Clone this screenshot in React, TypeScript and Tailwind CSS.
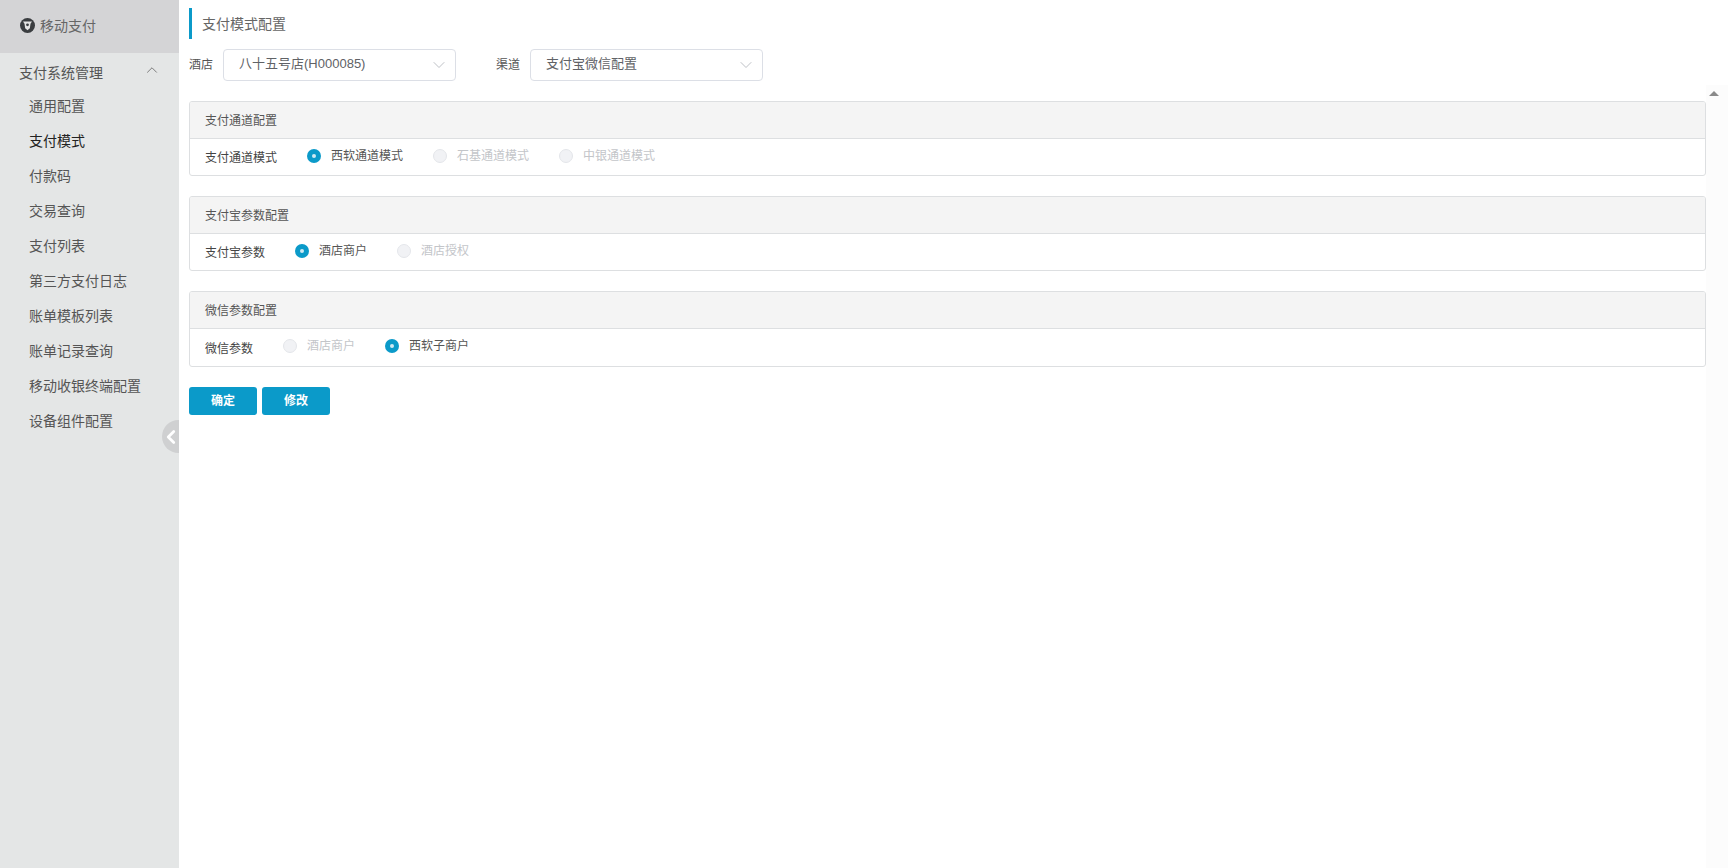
import { ChevronDown, ChevronLeft, ChevronUp } from "lucide-react";

const menuItems = [
  "通用配置",
  "支付模式",
  "付款码",
  "交易查询",
  "支付列表",
  "第三方支付日志",
  "账单模板列表",
  "账单记录查询",
  "移动收银终端配置",
  "设备组件配置",
];

const panels = [
  {
    title: "支付通道配置",
    label: "支付通道模式",
    rowClass: "h-[36px]",
    options: [
      { text: "西软通道模式", checked: true },
      { text: "石基通道模式", checked: false },
      { text: "中银通道模式", checked: false },
    ],
  },
  {
    title: "支付宝参数配置",
    label: "支付宝参数",
    rowClass: "h-[36px]",
    options: [
      { text: "酒店商户", checked: true },
      { text: "酒店授权", checked: false },
    ],
  },
  {
    title: "微信参数配置",
    label: "微信参数",
    rowClass: "h-[37px]",
    options: [
      { text: "酒店商户", checked: false },
      { text: "西软子商户", checked: true },
    ],
  },
];

const Radio = ({ text, checked }: { text: string; checked: boolean }) => (
  <div className="flex items-center gap-[10px] -mt-[3px]">
    {checked ? (
      <span className="flex h-[14px] w-[14px] items-center justify-center rounded-full bg-[#0b9ac9]">
        <span className="h-[4px] w-[4px] rounded-full bg-[#cfe9f3]" />
      </span>
    ) : (
      <span className="h-[14px] w-[14px] rounded-full border border-[#e4e6ea] bg-[#f1f2f5]" />
    )}
    <span className={checked ? "text-[#555]" : "text-[#c3c5c9]"}>{text}</span>
  </div>
);

const Select = ({ value }: { value: string }) => (
  <div className="flex h-[32px] w-[233px] items-center justify-between rounded-[4px] border border-[#dcdfe6] pl-[15px] pr-[6px] text-[13px] text-[#606266]">
    <span className="-mt-[2px]">{value}</span>
    <ChevronDown size={20} strokeWidth={0.9} className="text-[#a8acb3]" />
  </div>
);

const App = () => {
  return (
    <div className="relative flex h-screen overflow-hidden bg-white font-['Liberation_Sans','Noto_Sans_CJK_SC',sans-serif]">
      <aside className="w-[179px] shrink-0 bg-[#e4e6e6] text-sm text-[#555]">
        <div className="flex h-[53px] items-center gap-[5px] bg-[#d4d4d6] pb-[2px] pl-[20px] text-[#666]">
          <svg width="15" height="15" viewBox="0 0 14 14">
            <circle cx="7" cy="7" r="7" fill="#3a3d40" />
            <path d="M2.8 3.2 11.2 3.2 9.8 5.4 9.2 9.6 7 11.4 4.8 9.6 4.2 5.4Z" fill="#e4e4e4" />
            <circle cx="7" cy="6.4" r="1.3" fill="#3a3d40" />
          </svg>
          <span>移动支付</span>
        </div>
        <div className="flex h-[35px] items-center justify-between pl-[19px] pr-[18px] pt-[5px]">
          <span>支付系统管理</span>
          <ChevronUp size={18} strokeWidth={1.1} className="-mt-[6px] text-[#666]" />
        </div>
        <ul className="pl-[29px]">
          {menuItems.map((item) => (
            <li
              key={item}
              className={`flex h-[35px] items-center ${item === "支付模式" ? "text-[#222]" : ""}`}
            >
              {item}
            </li>
          ))}
        </ul>
      </aside>

      <main className="min-w-0 flex-1 pl-[10px] pr-[22px] pt-[8px]">
        <div className="flex h-[31px] items-center border-l-[3px] border-[#0b9ac9] pl-[10px] text-sm text-[#666]">
          支付模式配置
        </div>
        <div className="mt-[10px] flex items-center text-xs text-[#555]">
          <span className="mr-[10px]">酒店</span>
          <Select value="八十五号店(H000085)" />
          <span className="ml-[40px] mr-[10px]">渠道</span>
          <Select value="支付宝微信配置" />
        </div>

        <div className="mt-[20px] flex flex-col gap-[20px] text-xs">
          {panels.map((panel) => (
            <section
              key={panel.title}
              className="overflow-hidden rounded-[3px] border border-[#dddfe1]"
            >
              <div className="flex h-[37px] items-center border-b border-[#dddfe1] bg-[#f4f4f4] pl-[15px] pt-[1px] text-[#555]">
                {panel.title}
              </div>
              <div className={`flex items-center gap-[30px] pl-[15px] text-[#444] ${panel.rowClass}`}>
                <span className="pt-[2px]">{panel.label}</span>
                {panel.options.map((option) => (
                  <Radio key={option.text} text={option.text} checked={option.checked} />
                ))}
              </div>
            </section>
          ))}
        </div>

        <div className="mt-[20px] flex gap-[5px]">
          <button className="h-[28px] w-[68px] rounded-[3px] bg-[#0b9ac9] text-xs font-bold text-white">
            确定
          </button>
          <button className="h-[28px] w-[68px] rounded-[3px] bg-[#0b9ac9] text-xs font-bold text-white">
            修改
          </button>
        </div>
      </main>

      {/* collapse handle, half hidden under the main area */}
      <div className="absolute left-[162px] top-[420px] h-[33px] w-[17px] overflow-hidden">
        <div className="flex h-[33px] w-[33px] items-center rounded-full bg-[#cfd0d1]">
          <ChevronLeft size={22} strokeWidth={3} className="-ml-[2px] shrink-0 text-white" />
        </div>
      </div>

      {/* scrollbar track of the inner frame */}
      <div className="absolute bottom-0 right-0 top-[85px] w-[22px] bg-[#fcfcfc]">
        <div className="ml-[3px] mt-[6px] h-0 w-0 border-x-[5px] border-b-[5px] border-x-transparent border-b-[#8a8a8a]" />
      </div>
    </div>
  );
};

export default App;
